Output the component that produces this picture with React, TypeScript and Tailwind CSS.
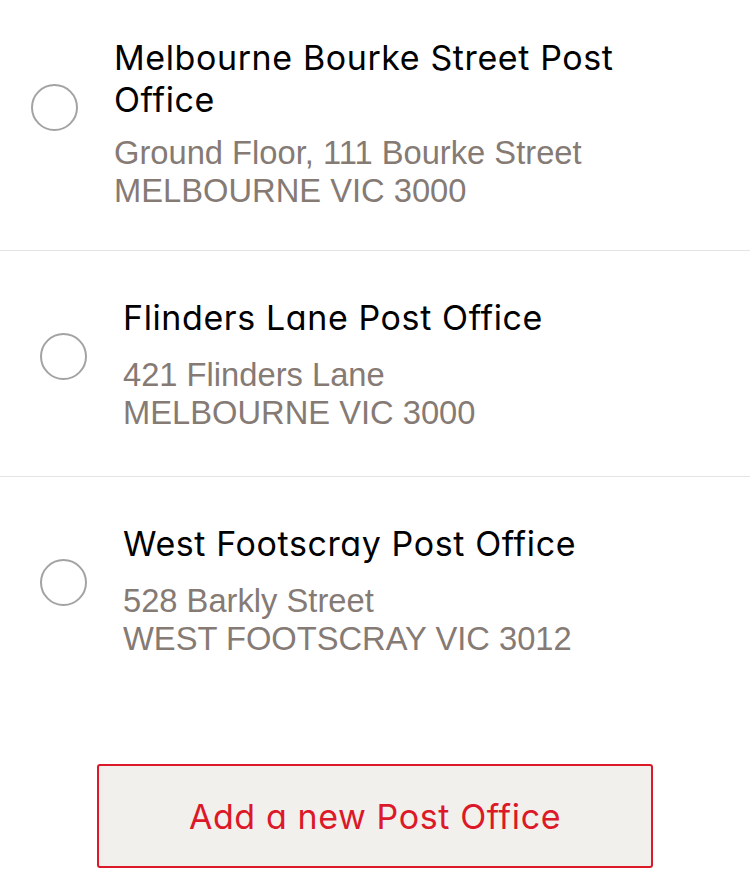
import React from "react";

type Office = { name: string; line1: string; line2: string };

const offices: Office[] = [
  { name: "Melbourne Bourke Street Post Office", line1: "Ground Floor, 111 Bourke Street", line2: "MELBOURNE VIC 3000" },
  { name: "Flinders Lane Post Office", line1: "421 Flinders Lane", line2: "MELBOURNE VIC 3000" },
  { name: "West Footscray Post Office", line1: "528 Barkly Street", line2: "WEST FOOTSCRAY VIC 3012" },
];

function Item({ o, index }: { o: Office; index: number }) {
  const first = index === 0;
  const last = index === offices.length - 1;
  const wrap =
    "flex items-start " +
    (first ? "pl-[31px] pt-[37px] pb-[40px]" : "pl-[40px] pt-[46px] pb-[44px]") +
    (last ? "" : " border-b border-[#e6e4e1]");
  return (
    <div className={wrap}>
      <div
        className={
          "w-[47px] h-[47px] rounded-full border-2 border-[#a3a3a3] shrink-0 " +
          (first ? "mt-[47px]" : "mt-[36px]")
        }
      />
      <div className="ml-[36px] pr-[60px] min-w-0">
        <div className="font-['Inter',sans-serif] [font-feature-settings:'cv11'] text-[34px] leading-[42px] tracking-[0.6px] text-black">
          {o.name}
        </div>
        <div
          className={
            "font-['Liberation_Sans',Arial,sans-serif] text-[32.7px] leading-[38px] text-[#857a74] " +
            (first ? "mt-[13px]" : "mt-[17px]")
          }
        >
          <div>{o.line1}</div>
          <div>{o.line2}</div>
        </div>
      </div>
    </div>
  );
}

export default function App() {
  return (
    <div className="w-[750px] h-[870px] bg-white overflow-hidden">
      {offices.map((o, i) => (
        <Item key={o.name} o={o} index={i} />
      ))}
      <div className="flex justify-center mt-[62px]">
        <button className="w-[556px] h-[104px] rounded-[3px] border-2 border-[#dc1928] bg-[#f2f0ed] text-[#dc1928] font-['Inter',sans-serif] [font-feature-settings:'cv11'] text-[34px] tracking-[0.6px]">
          Add a new Post Office
        </button>
      </div>
    </div>
  );
}
